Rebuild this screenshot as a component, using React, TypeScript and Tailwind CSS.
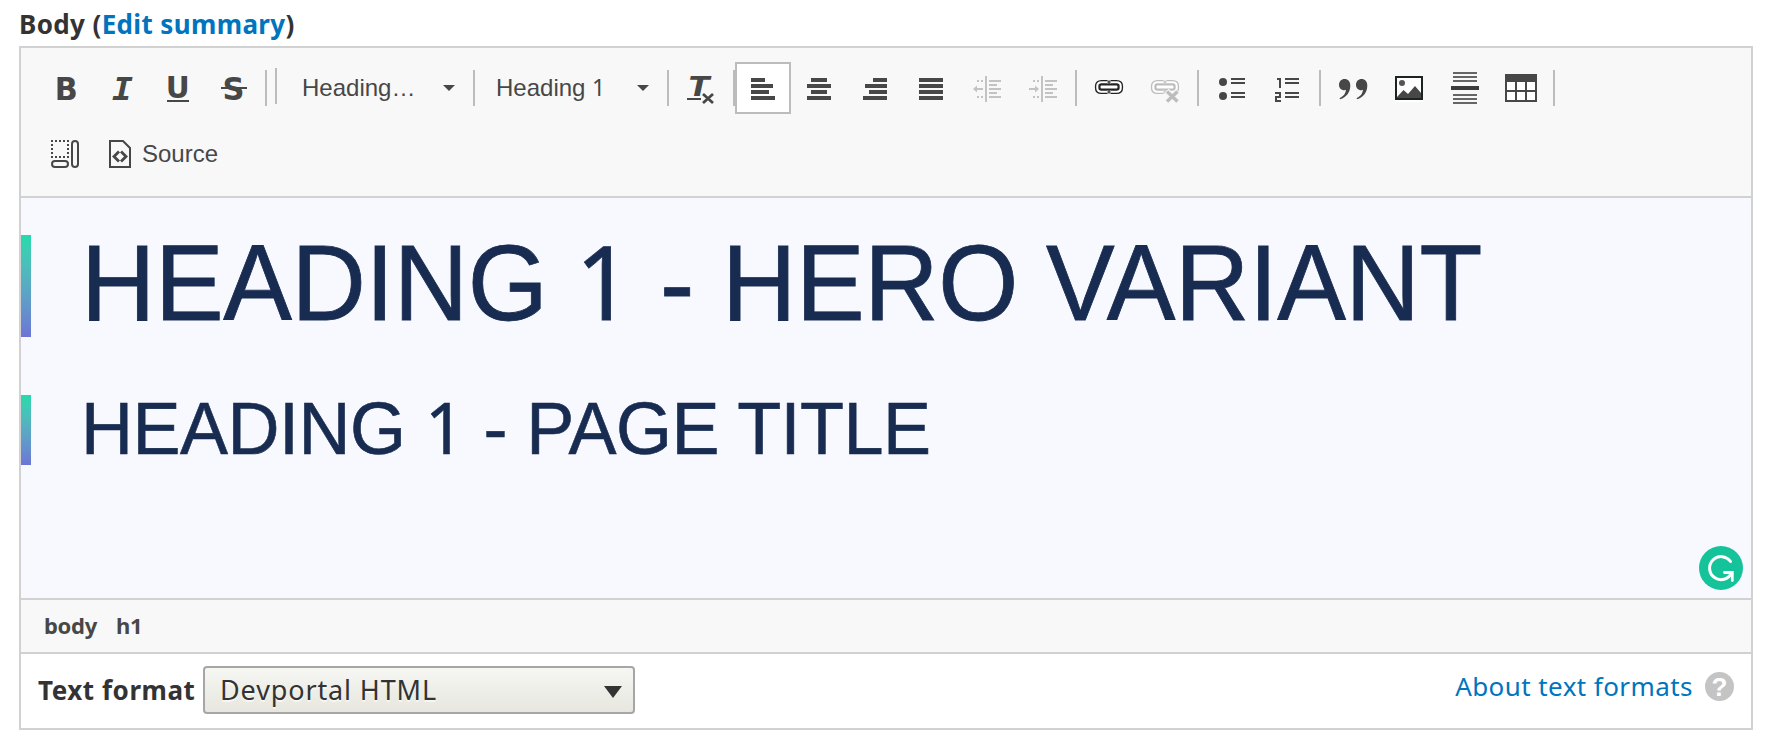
import type { ReactNode } from "react";

const ARIAL = "font-['Liberation_Sans',Arial,sans-serif]";
const LUCIDA = "font-['Noto_Sans','Open_Sans',sans-serif]";

function Icon({ children }: { children: ReactNode }) {
  return (
    <svg width="32" height="32" viewBox="0 0 32 32" fill="#474747" className="block shrink-0 overflow-visible">
      {children}
    </svg>
  );
}

function Btn({ label, active = false, children }: { label: string; active?: boolean; children: ReactNode }) {
  return (
    <button
      aria-label={label}
      className={
        active
          ? "flex h-[52px] w-[56px] shrink-0 items-center justify-center border-2 border-[#bcbcbc] bg-white"
          : "flex h-[52px] w-[56px] shrink-0 items-center justify-center"
      }
    >
      <Icon>{children}</Icon>
    </button>
  );
}

function Sep({ className = "" }: { className?: string }) {
  return <span className={`h-[36px] w-[2px] shrink-0 bg-[#bcbcbc] ${className}`} />;
}

function Bars({ rows }: { rows: number[][] }) {
  return (
    <>
      {rows.map(([x, w], i) => (
        <rect key={i} x={x} y={6 + i * 6} width={w} height="4" />
      ))}
    </>
  );
}

function IndentLines({ children }: { children: ReactNode }) {
  return (
    <g fill="#c3c3c3">
      <rect x="14" y="4" width="2" height="26" />
      {[8, 24].map((y) => (
        <g key={y}>
          <rect x="6" y={y} width="2" height="2" />
          <rect x="10" y={y} width="2" height="2" />
        </g>
      ))}
      {[8, 16, 24].map((y) => (
        <rect key={y} x="18" y={y} width="12" height="2" />
      ))}
      {[12, 20].map((y) => (
        <rect key={y} x="18" y={y} width="8" height="2" />
      ))}
      {children}
    </g>
  );
}

function Chain({ color }: { color: string }) {
  const ring = "M14.5 10.300H8.5Q4.300 10.300 4.300 14V16Q4.300 19.700 8.500 19.700H14.5M17.5 10.300H23.5Q27.700 10.300 27.700 14V16Q27.700 19.700 23.5 19.700H17.5";
  return (
    <g fill="none">
      <path d={ring} stroke={color} strokeWidth="4.800" />
      <rect x="6.800" y="12.700" width="18.400" height="4.600" rx="1.5" fill="#fff" stroke={color} strokeWidth="1.500" />
      <path d={ring} stroke="#fff" strokeWidth="2.100" />
      <path d="M16 8.500v3.500M16 18V21.500" stroke={color} strokeWidth="2.4" opacity="0.75" />
    </g>
  );
}

function Caret() {
  return (
    <svg width="12" height="6" viewBox="0 0 12 6" className="block shrink-0">
      <path d="M0 0H12L6 6Z" fill="#474747" />
    </svg>
  );
}

function ListLines({ x }: { x: number }) {
  return (
    <>
      {[6, 10, 20, 24].map((y) => (
        <rect key={y} x={x} y={y} width="14" height="2" />
      ))}
    </>
  );
}

function One() {
  return <span className="font-['Noto_Sans',sans-serif] text-[0.96em] leading-none">1</span>;
}

function Toolbar() {
  return (
    <div className="h-[150px] border-b-2 border-[#d1d1d1] bg-[#f8f8f8] pt-[14px] pl-[17px]">
      <div className="flex h-[52px] items-center">
        <Btn label="Bold">
          <text x="4.8" y="28" fontFamily="DejaVu Sans" fontWeight="700" fontSize="32" textLength="23" lengthAdjust="spacingAndGlyphs">B</text>
        </Btn>
        <Btn label="Italic">
          <text x="6" y="28" fontFamily="DejaVu Sans Mono" fontWeight="700" fontStyle="italic" fontSize="32" textLength="21" lengthAdjust="spacingAndGlyphs">I</text>
        </Btn>
        <Btn label="Underline">
          <text x="3.8" y="25.5" fontFamily="DejaVu Sans" fontWeight="700" fontSize="30" textLength="24" lengthAdjust="spacingAndGlyphs">U</text>
          <rect x="5" y="28" width="22" height="2" />
        </Btn>
        <Btn label="Strikethrough">
          <text x="4.5" y="27.5" fontFamily="DejaVu Sans" fontWeight="700" fontSize="31.5" textLength="22" lengthAdjust="spacingAndGlyphs">S</text>
          <rect x="3" y="15" width="26" height="2" />
        </Btn>
        <Sep className="ml-[3px]" />
        <Sep className="mb-[4px] ml-[8px]" />
        <button className={`ml-[25px] flex w-[153px] items-center justify-between text-[24px] text-[#474747] ${ARIAL}`}>
          <span>Heading…</span>
          <Caret />
        </button>
        <Sep className="ml-[18px]" />
        <button className={`ml-[21px] flex w-[153px] items-center justify-between text-[24px] text-[#474747] ${ARIAL}`}>
          <span>
            Heading <One />
          </span>
          <Caret />
        </button>
        <Sep className="ml-[18px]" />
        <span className="w-[4px] shrink-0" />
        <Btn label="Remove Format">
          <text x="3.5" y="24" fontFamily="DejaVu Sans" fontWeight="700" fontStyle="italic" fontSize="27.4" textLength="21" lengthAdjust="spacingAndGlyphs">T</text>
          <rect x="2" y="26" width="14" height="2" />
          <path d="M18 22L28 31M28 22L18 31" stroke="#474747" strokeWidth="2.8" />
        </Btn>
        <Sep className="ml-[4px]" />
        <Btn label="Align Left" active>
          <Bars rows={[[4, 14], [4, 22], [4, 18], [4, 24]]} />
        </Btn>
        <Btn label="Center">
          <Bars rows={[[8, 16], [4, 24], [8, 16], [4, 24]]} />
        </Btn>
        <Btn label="Align Right">
          <Bars rows={[[14, 14], [6, 22], [10, 18], [4, 24]]} />
        </Btn>
        <Btn label="Justify">
          <Bars rows={[[4, 24], [4, 24], [4, 24], [4, 24]]} />
        </Btn>
        <Btn label="Decrease Indent">
          <IndentLines>
            <path d="M2 17L6 13.5V16H12V18H6V20.5Z" />
          </IndentLines>
        </Btn>
        <Btn label="Increase Indent">
          <IndentLines>
            <path d="M12 17L8 13.5V16H2V18H8V20.5Z" />
          </IndentLines>
        </Btn>
        <Sep className="mx-[4px]" />
        <Btn label="Link">
          <Chain color="#222" />
        </Btn>
        <Btn label="Unlink">
          <Chain color="#bdbdbd" />
          <path d="M17.5 19L29 30M29 19L17.5 30" stroke="#f8f8f8" strokeWidth="6" />
          <path d="M18 19.5L28.5 29.5M28.5 19.5L18 29.5" stroke="#bdbdbd" strokeWidth="3.4" />
        </Btn>
        <Sep className="mx-[4px]" />
        <Btn label="Bulleted List">
          <circle cx="8" cy="10" r="4" />
          <circle cx="8" cy="24" r="4" />
          <ListLines x={16} />
        </Btn>
        <Btn label="Numbered List">
          <path d="M6 6H10V16H8V8H6ZM4 20H10V26H6V28H10V30H4V24H8V22H4Z" />
          <ListLines x={14} />
        </Btn>
        <Sep className="mx-[4px]" />
        <Btn label="Block Quote">
          {[2, 19].map((x) => (
            <path key={x} transform={`translate(${x} 7)`} d="M5.5 0C9 0 11.3 2.4 11.3 6.5C11.3 13 7.5 18.5 1 20.3L.6 19.3C4.5 17.3 6.8 14.5 7 10.8Q6.3 11.2 5.3 11.2C2 11.2 0 8.8 0 5.7C0 2.4 2.4 0 5.5 0Z" />
          ))}
        </Btn>
        <Btn label="Image">
          <rect x="2" y="4" width="28" height="26" fill="#fff" />
          <path fillRule="evenodd" fill="#1c2423" d="M2 4H30V28H2ZM4 6V26H28V6Z" />
          <circle cx="9" cy="11" r="3" fill="#555" />
          <path d="M4 26V25L10.5 18L15 22L22 14L28 21V26Z" />
        </Btn>
        <Btn label="Horizontal Line">
          {[0, 4, 8, 22, 26, 30].map((y) => (
            <rect key={y} x="4" y={y} width="24" height="2" fill="#666" />
          ))}
          <rect x="2" y="14" width="28" height="4" fill="#3c3c3c" />
        </Btn>
        <Btn label="Table">
          <rect x="0" y="2" width="32" height="28" />
          <g fill="#fff">
            {[10, 20].map((y) => [2, 12, 22].map((x) => <rect key={`${x}-${y}`} x={x} y={y} width="8" height="8" />))}
          </g>
        </Btn>
        <Sep className="ml-[4px]" />
      </div>
      <div className="mt-[14px] flex h-[52px] items-center">
        <Btn label="Show Blocks">
          <rect x="2" y="3" width="16" height="16" fill="none" stroke="#474747" strokeWidth="2" strokeDasharray="2 2" strokeDashoffset="1" />
          <rect x="22" y="3" width="6" height="26" rx="3" fill="none" stroke="#474747" strokeWidth="2" />
          <rect x="2" y="23" width="16" height="6" rx="3" fill="none" stroke="#474747" strokeWidth="2" />
        </Btn>
        <button className={`flex items-center pl-[11px] text-[24px] text-[#474747] ${ARIAL}`}>
          <Icon>
            <path d="M5 3H18L25 10V29H5Z" fill="none" stroke="#474747" strokeWidth="2" />
            <path d="M14 13.500L9 18.5L14 23.500M16 13.500L21 18.5L16 23.500" fill="none" stroke="#474747" strokeWidth="2.8" />
          </Icon>
          <span className="ml-[5px]">Source</span>
        </button>
      </div>
    </div>
  );
}

export default function App() {
  return (
    <div className={`h-[741px] w-[1775px] overflow-hidden bg-white pl-[19px] text-[#333] ${LUCIDA}`}>
      <label className="flex h-[46px] items-center pt-px text-[26px] leading-none font-bold tracking-[0.37px] whitespace-pre">
        <span>Body (</span>
        <a className="text-[#0074bd]">Edit summary</a>
        <span>)</span>
      </label>
      <div className="flex h-[684px] w-[1734px] flex-col border-2 border-[#d1d1d1]">
        <Toolbar />
        <div className={`relative flex h-[402px] flex-col border-b-2 border-[#d1d1d1] bg-[#f8f9fe] pt-[37px] text-[#182b50] ${ARIAL}`}>
          <div className="flex h-[102px] items-center">
            <span className="h-full w-[10px] bg-linear-to-b from-[#22dbab] to-[#6c75d4]" />
            <h1 className="mb-[5px] ml-[50px] origin-left scale-y-[1.04] text-[103px] leading-none tracking-[-0.42px] whitespace-nowrap [-webkit-text-stroke:0.8px_#182b50]">
              HEADING <One /> - HERO VARIANT
            </h1>
          </div>
          <div className="mt-[58px] flex h-[70px] items-center">
            <span className="h-full w-[10px] bg-linear-to-b from-[#22dbab] to-[#6c75d4]" />
            <h1 className="mb-[5px] ml-[50px] origin-left scale-y-[1.04] text-[72px] leading-none tracking-[-0.52px] whitespace-nowrap [-webkit-text-stroke:0.6px_#182b50]">
              HEADING <One /> - PAGE TITLE
            </h1>
          </div>
          <svg width="44" height="44" viewBox="0 0 44 44" className="absolute right-[8px] bottom-[8px]">
            <circle cx="22" cy="22" r="22" fill="#15c39a" />
            <path d="M31.5 15.5A11.5 11.5 0 1 0 32.500 27" fill="none" stroke="#fff" strokeWidth="3" strokeLinecap="round" />
            <path d="M25.5 26.500H33.300V34.500" fill="none" stroke="#fff" strokeWidth="2.8" strokeLinecap="round" />
          </svg>
        </div>
        <div className="flex h-[54px] items-center gap-[19px] border-b-2 border-[#d1d1d1] bg-[#f8f8f8] pb-[2px] pl-[23px] text-[22px] font-bold tracking-[-0.3px] text-[#474747]">
          <span>body</span>
          <span>h1</span>
        </div>
        <div className="flex flex-1 items-start bg-white pt-[12px] pr-[17px] pl-[17px]">
          <label className="flex h-[48px] w-[165px] items-center text-[26px] font-bold tracking-[0.55px] whitespace-nowrap">Text format</label>
          <button className="flex h-[48px] w-[432px] items-center justify-between rounded-[4px] border-2 border-[#a6a6a6] bg-linear-to-b from-[#f6f6f3] to-[#e7e7df] pr-[11px] pl-[15px] text-[27px] tracking-[0.87px] whitespace-nowrap text-[#333] [text-shadow:0_2px_0_rgba(255,255,255,0.6)]">
            <span>Devportal HTML</span>
            <svg width="18" height="12" viewBox="0 0 18 12" className="mt-[3px]">
              <path d="M0 0H18L9 12Z" fill="#333" />
            </svg>
          </button>
          <div className="ml-auto flex items-center gap-[12px] pt-[2px]">
            <a className="text-[26px] leading-[36px] tracking-[0.43px] whitespace-nowrap text-[#0074bd]">About text formats</a>
            <span className="mt-px flex size-[29px] items-center justify-center rounded-full bg-[#c4c4c4] font-['Liberation_Sans'] text-[26px] leading-none font-bold text-white">?</span>
          </div>
        </div>
      </div>
    </div>
  );
}
